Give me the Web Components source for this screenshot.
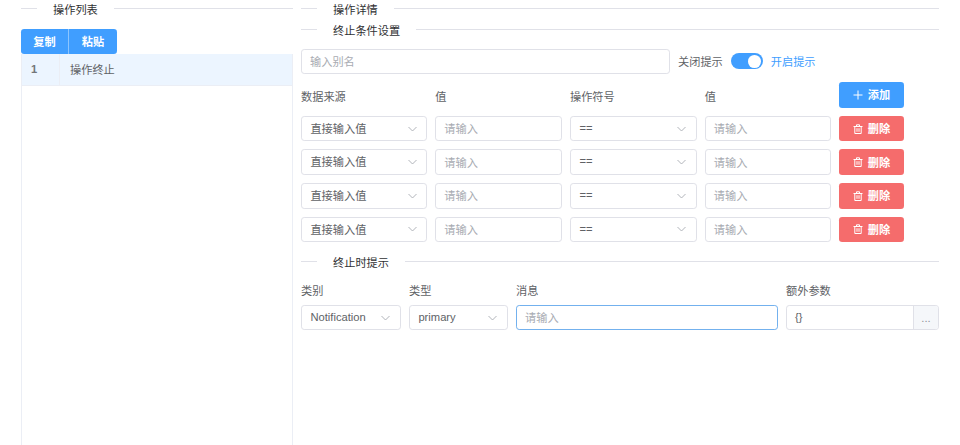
<!DOCTYPE html>
<html lang="zh">
<head>
<meta charset="utf-8">
<title>操作</title>
<style>
  html, body { margin: 0; height: 100%; background: #fff; overflow: hidden; }
  body { font: 11.2px "Liberation Sans", "Noto Sans CJK SC", sans-serif; color: #606266; }
</style>
</head>
<body>
<action-editor></action-editor>
<script>
const FONT = `"Liberation Sans", "Noto Sans CJK SC", sans-serif`

class UiDivider extends HTMLElement {
  constructor() {
    super()
    this.attachShadow({mode: 'open'}).innerHTML = `
      <style>
        :host { display: flex; align-items: center; height: 17px; color: #303133; font-size: 11.2px; }
        i { height: 1px; background: #e0e1e8; }
        i:first-of-type { width: 16px; flex: none; }
        i:last-of-type { flex: 1; }
        span { padding: 1px 16px 0; white-space: nowrap; }
      </style>
      <i></i><span><slot></slot></span><i></i>
    `
  }
}

class UiButton extends HTMLElement {
  constructor() {
    super()
    const icons = {
      plus: '<path d="M5 .5v9M.5 5h9" stroke="currentColor" fill="none" stroke-width="1"/>',
      trash: '<path d="M.5 2.5h9M3.5 2.5V.8h3v1.7M1.8 2.5v7h6.4v-7M4 4.2v3.6M6 4.2v3.6" stroke="currentColor" fill="none" stroke-width="1"/>'
    }
    const icon = icons[this.getAttribute('icon')]
    this.attachShadow({mode: 'open'}).innerHTML = `
      <style>
        :host { display: inline-flex; align-items: center; justify-content: center; gap: 5px; box-sizing: border-box;
                height: 25.6px; padding: 0 12px; border-radius: 3.2px; background: #409eff; color: #fff;
                font-size: 11.2px; font-weight: 700; cursor: pointer; }
        :host([type=danger]) { background: #f56c6c; }
        svg { width: 10px; height: 10px; display: block; }
        span { padding-bottom: 1px; }
      </style>
      ${icon ? `<svg viewBox="0 0 10 10">${icon}</svg>` : ''}<span><slot></slot></span>
    `
  }
}

class UiInput extends HTMLElement {
  constructor() {
    super()
    const holder = this.getAttribute('placeholder') || ''
    const value = this.getAttribute('value') || ''
    this.attachShadow({mode: 'open'}).innerHTML = `
      <style>
        :host { display: flex; box-sizing: border-box; height: 25.6px; min-width: 0; border: 1px solid #e0e1e8;
                border-radius: 3.2px; background: #fff; overflow: hidden; }
        :host([focused]) { border-color: #73b1ee; }
        div { flex: 1; min-width: 0; display: flex; align-items: center; padding: 0 8px 1px; color: #606266; }
        div.empty { color: #a8abb2; }
        ::slotted(*) { flex: none; }
      </style>
      <div class="${value ? '' : 'empty'}">${value || holder}</div><slot></slot>
    `
  }
}

class UiSelect extends HTMLElement {
  constructor() {
    super()
    this.attachShadow({mode: 'open'}).innerHTML = `
      <style>
        :host { display: flex; align-items: center; box-sizing: border-box; height: 25.6px; min-width: 0; padding: 0 9.6px 0 8.4px;
                border: 1px solid #e0e1e8; border-radius: 3.2px; background: #fff; color: #606266; }
        span { flex: 1; white-space: nowrap; padding-bottom: 1.5px; }
        svg { width: 9px; height: 6px; display: block; flex: none; }
      </style>
      <span><slot></slot></span>
      <svg viewBox="0 0 9 6"><path d="M.5 1l4 4 4-4" fill="none" stroke="#a8abb2" stroke-width=".9"/></svg>
    `
  }
}

class UiSwitch extends HTMLElement {
  constructor() {
    super()
    this.attachShadow({mode: 'open'}).innerHTML = `
      <style>
        :host { display: flex; align-items: center; gap: 8px; color: #409eff; white-space: nowrap; }
        b { display: flex; justify-content: flex-end; align-items: center; box-sizing: border-box; width: 32px; height: 16px;
            padding: 0 1.6px; border-radius: 8px; background: #409eff; }
        b::after { content: ''; width: 12.8px; height: 12.8px; border-radius: 50%; background: #fff; }
      </style>
      <b></b><span><slot></slot></span>
    `
  }
}

class ActionList extends HTMLElement {
  constructor() {
    super()
    this.attachShadow({mode: 'open'}).innerHTML = `
      <style>
        :host { display: flex; flex-direction: column; height: 100%; }
        .tools { display: flex; margin-top: 12px; }
        .tools ui-button { height: 25px; width: 47px; padding: 0; border-radius: 3.2px 0 0 3.2px; }
        .tools ui-button + ui-button { width: 49px; border-left: 1px solid #8cc5ff; border-radius: 0 3.2px 3.2px 0; }
        .table { flex: 1; box-sizing: border-box; border: solid #ebeef5; border-width: 0 1px; }
        .row { display: flex; height: 31.5px; box-sizing: border-box; background: #ecf5ff; border-bottom: 1px solid #ebeef5; align-items: center; }
        .num { box-sizing: border-box; width: 38px; height: 100%; padding-left: 9px; display: flex; align-items: center;
               border-right: 1px solid #ebeef5; color: #737679; font-weight: 700; }
        .name { padding-left: 10px; color: #606266; }
      </style>
      <ui-divider>操作列表</ui-divider>
      <div class="tools"><ui-button>复制</ui-button><ui-button>粘贴</ui-button></div>
      <div class="table">
        <div class="row"><div class="num">1</div><div class="name">操作终止</div></div>
      </div>
    `
  }
}

class ActionDetail extends HTMLElement {
  constructor() {
    super()
    const rows = [1, 2, 3, 4].map(() => `
      <ui-select>直接输入值</ui-select>
      <ui-input placeholder="请输入"></ui-input>
      <ui-select>==</ui-select>
      <ui-input placeholder="请输入"></ui-input>
      <ui-button type="danger" icon="trash">删除</ui-button>
    `).join('')
    this.attachShadow({mode: 'open'}).innerHTML = `
      <style>
        :host { display: block; }
        .sub { margin-top: 4px; }
        .alias { display: flex; align-items: center; margin-top: 10.6px; white-space: nowrap; }
        .alias ui-input { width: 369px; margin-right: 8px; }
        .alias span { margin-right: 8px; }
        .conds { display: grid; grid-template-columns: 126.3px 126.7px 126.8px 126.2px 65px; gap: 8px; align-items: center; margin-top: 8px; }
        .conds label { padding-top: 2px; }
        .conds ui-button { padding: 0; }
        .end { margin-top: 11.2px; }
        .fields { display: grid; grid-template-columns: 100px 99px 262px 153px; column-gap: 8px; row-gap: 6px; margin-top: 14px; }
        .fields label { line-height: 15px; }
        .fields ui-select, .fields ui-input { height: 25px; }
        .extra { padding-right: 0; }
        .more { display: flex; align-items: center; justify-content: center; width: 24px; border-left: 1px solid #e0e1e8;
                background: #f5f7fa; color: #909399; }
      </style>
      <ui-divider>操作详情</ui-divider>
      <ui-divider class="sub">终止条件设置</ui-divider>
      <div class="alias">
        <ui-input placeholder="输入别名"></ui-input>
        <span>关闭提示</span>
        <ui-switch>开启提示</ui-switch>
      </div>
      <div class="conds">
        <label>数据来源</label><label>值</label><label>操作符号</label><label>值</label>
        <ui-button icon="plus">添加</ui-button>
        ${rows}
      </div>
      <ui-divider class="end">终止时提示</ui-divider>
      <div class="fields">
        <label>类别</label><label>类型</label><label>消息</label><label>额外参数</label>
        <ui-select>Notification</ui-select>
        <ui-select>primary</ui-select>
        <ui-input focused placeholder="请输入"></ui-input>
        <ui-input class="extra" value="{}"><div class="more">...</div></ui-input>
      </div>
    `
  }
}

class ActionEditor extends HTMLElement {
  constructor() {
    super()
    this.attachShadow({mode: 'open'}).innerHTML = `
      <style>
        :host { display: grid; grid-template-columns: 272px 638px; column-gap: 8px; box-sizing: border-box;
                height: 100vh; padding: 0 21px; font-family: ${FONT}; }
      </style>
      <action-list></action-list>
      <action-detail></action-detail>
    `
  }
}

customElements.define('ui-divider', UiDivider)
customElements.define('ui-button', UiButton)
customElements.define('ui-input', UiInput)
customElements.define('ui-select', UiSelect)
customElements.define('ui-switch', UiSwitch)
customElements.define('action-list', ActionList)
customElements.define('action-detail', ActionDetail)
customElements.define('action-editor', ActionEditor)
</script>
</body>
</html>
